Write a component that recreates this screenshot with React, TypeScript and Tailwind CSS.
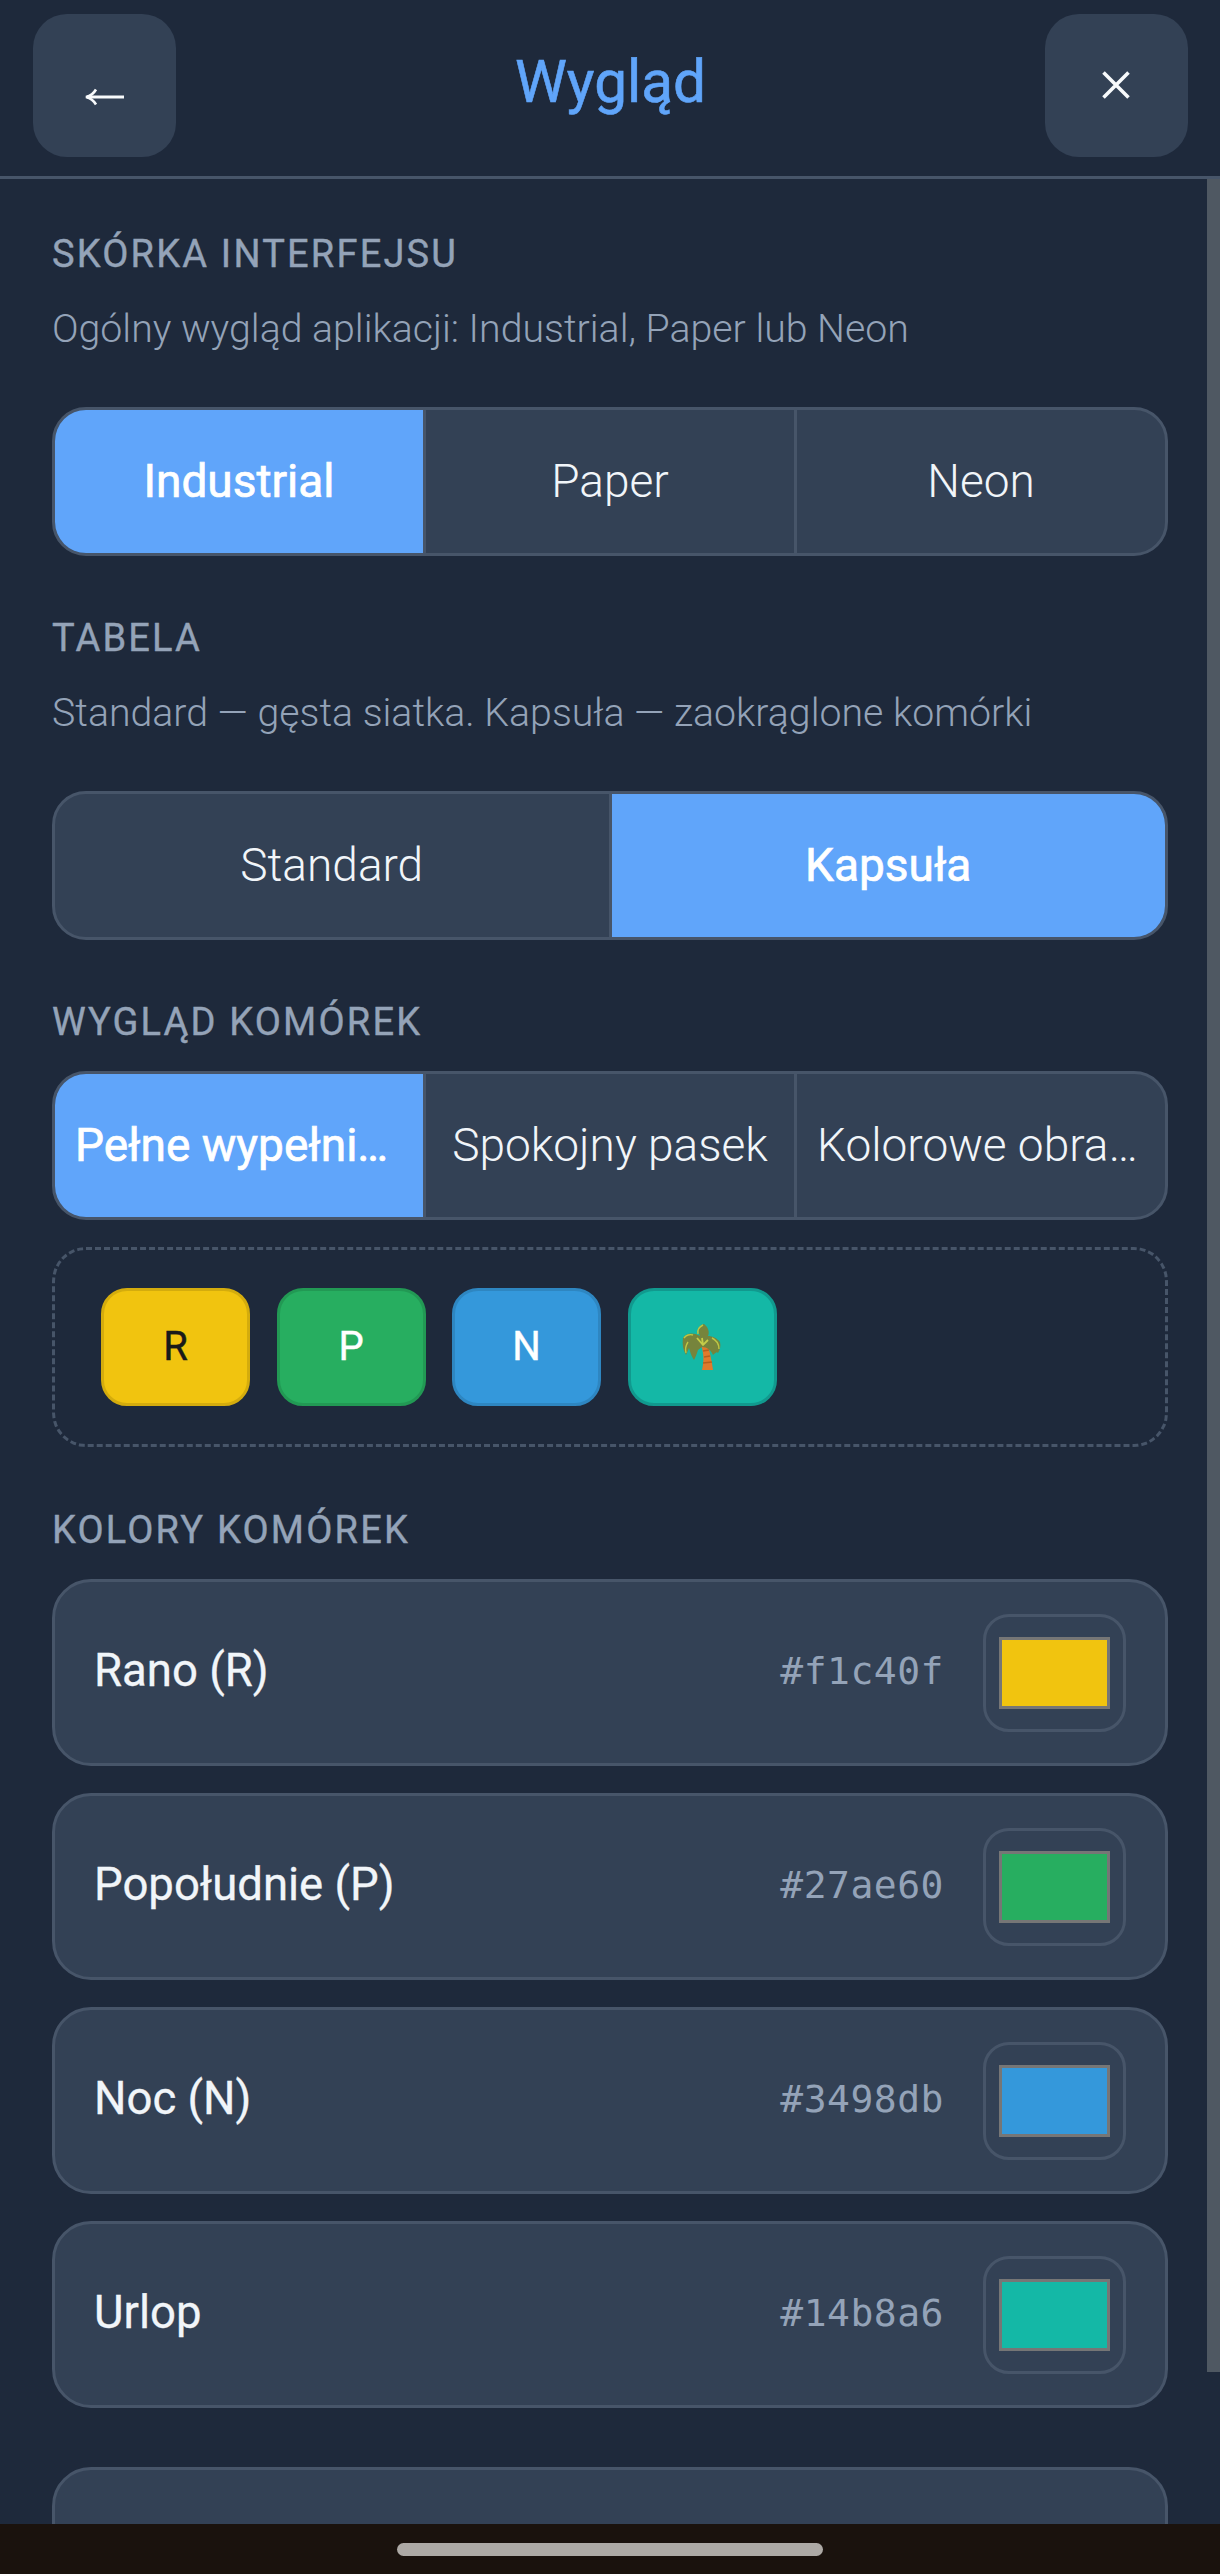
import React from "react";

const font = { fontFamily: "Roboto, 'Noto Sans', sans-serif" };

function Segmented({ items, active, className = "" }: { items: string[]; active: number; className?: string }) {
  return (
    <div className={`flex h-[149px] w-[1116px] overflow-hidden rounded-[34px] border-[3px] border-[#475569] bg-[#334155] ${className}`}>
      {items.map((t, i) => (
        <div
          key={t}
          className={`flex min-w-0 flex-1 items-center justify-center px-[20px] text-[46px] ${i < items.length - 1 ? "border-r-[3px] border-[#475569]" : ""} ${i === active ? "bg-[#60a5fa] font-normal text-white [-webkit-text-stroke:0.7px]" : "font-light text-[#f1f5f9]"}`}
        >
          <span className="truncate">{t}</span>
        </div>
      ))}
    </div>
  );
}

function Label({ children, className = "" }: { children: React.ReactNode; className?: string }) {
  return <div className={`h-[46px] text-[38px] leading-[46px] font-normal tracking-[2.2px] text-[#94a3b8] [-webkit-text-stroke:0.4px] ${className}`}>{children}</div>;
}

function Hint({ children }: { children: React.ReactNode }) {
  return <div className="mt-[29px] h-[46px] text-[39.25px] leading-[46px] font-light text-[#94a3b8]">{children}</div>;
}

function Chip({ bg, border, text, children }: { bg: string; border: string; text: string; children: React.ReactNode }) {
  return (
    <div className={`flex h-[118px] w-[149px] items-center justify-center rounded-[26px] border-[3px] text-[40px] font-normal [-webkit-text-stroke:0.4px] ${bg} ${border} ${text}`}>
      {children}
    </div>
  );
}

function ColorRow({ name, hex, bg }: { name: string; hex: string; bg: string }) {
  return (
    <div className="flex h-[187px] w-[1116px] items-center rounded-[39px] border-[3px] border-[#475569] bg-[#334155] pr-[39px] pl-[39px]">
      <div className="mb-[3px] flex-1 text-[45.5px] font-normal text-[#f1f5f9] [-webkit-text-stroke:0.3px]">{name}</div>
      <div className="mr-[39px] mb-[2px] text-[38px] tracking-[0.5px] text-[#94a3b8]" style={{ fontFamily: "'DejaVu Sans Mono', monospace" }}>{hex}</div>
      <div className="flex h-[118px] w-[143px] items-center justify-center rounded-[26px] border-[3px] border-[#475569]">
        <div className={`h-[72px] w-[111px] border-[3px] border-[#767676] ${bg}`} />
      </div>
    </div>
  );
}

function Palm() {
  return (
    <svg width="40" height="47" viewBox="0 0 40 47" fill="none">
      <path d="M19 21 L26 20 C28 30 30 38 31 46 L20 46 C22 38 22 29 19 21 Z" fill="#e07a2c" />
      <path d="M21 27l6-1M22 33l6-1M21 39l9-1" stroke="#b85f1e" strokeWidth="1.6" />
      <path d="M18 12 C11 8 4 9 1 14 C0 20 1 26 4 31 L7 24 C8 27 9 32 12 36 C14 32 15 29 16 26 L20 23 C25 23 29 26 31 31 C33 29 35 27 36 29 C38 26 39 22 38 18 C35 14 30 12 26 12 C28 8 26 3 22 0 C17 1 15 6 18 12 Z" fill="#76843c" />
      <path d="M2 14 C4 11 8 10 11 11 M4 29 C3 25 4 21 6 18 M16 10 C15 6 17 3 21 1 M37 25 C37 20 34 16 30 14" stroke="#bcc644" strokeWidth="1.4" />
      <path d="M15 14 L21 21 L26 16 M21 21 L20 14" stroke="#c4cc48" strokeWidth="1.8" />
    </svg>
  );
}

export default function App() {
  return (
    <div className="relative flex h-[2574px] w-[1220px] flex-col overflow-hidden bg-[#1e293b]" style={font}>
      <header className="flex h-[179px] shrink-0 items-start justify-between border-b-[3px] border-[#475569] pt-[14px] pr-[32px] pl-[33px]">
        <button className="flex h-[143px] w-[143px] items-center justify-center rounded-[34px] bg-[#334155] pt-[22px]">
          <svg width="42" height="18" viewBox="0 0 42 18" fill="none">
            <path d="M3 9H40" stroke="#f8fafc" strokeWidth="3.2" />
            <path d="M12 1.5C10 5 6 8 2 9c4 1 8 4 10 7.5" stroke="#f8fafc" strokeWidth="2.6" fill="none" />
          </svg>
        </button>
        <h1 className="mt-[34px] text-[58.5px] leading-[68px] font-normal text-[#60a5fa] [-webkit-text-stroke:0.6px]">Wygląd</h1>
        <button className="flex h-[143px] w-[143px] items-center justify-center rounded-[34px] bg-[#334155] pr-[1px] pb-[1px]">
          <svg width="28" height="28" viewBox="0 0 28 28" fill="none">
            <path d="M1.5 1.5L26.5 26.5M26.5 1.5L1.5 26.5" stroke="#f8fafc" strokeWidth="3.6" />
          </svg>
        </button>
      </header>

      <main className="min-h-0 flex-1 overflow-hidden px-[52px] pt-[52px]">
        <Label>SKÓRKA INTERFEJSU</Label>
        <Hint>Ogólny wygląd aplikacji: Industrial, Paper lub Neon</Hint>
        <Segmented className="mt-[55px]" items={["Industrial", "Paper", "Neon"]} active={0} />

        <Label className="mt-[59px]">TABELA</Label>
        <Hint>Standard — gęsta siatka. Kapsuła — zaokrąglone komórki</Hint>
        <Segmented className="mt-[55px]" items={["Standard", "Kapsuła"]} active={1} />

        <Label className="mt-[59px]">WYGLĄD KOMÓREK</Label>
        <Segmented className="mt-[26px]" items={["Pełne wypełnienie", "Spokojny pasek", "Kolorowe obramowanie"]} active={0} />

        <div className="mt-[27px] flex h-[200px] w-[1116px] items-center gap-[26.5px] rounded-[34px] border-[3px] border-dashed border-[#475569] pl-[46px]">
          <Chip bg="bg-[#f1c40f]" border="border-[#d4ac0d]" text="text-[#1a1a1a]">R</Chip>
          <Chip bg="bg-[#27ae60]" border="border-[#229954]" text="text-white">P</Chip>
          <Chip bg="bg-[#3498db]" border="border-[#2e86c1]" text="text-white">N</Chip>
          <Chip bg="bg-[#14b8a6]" border="border-[#11998e]" text="text-white"><Palm /></Chip>
        </div>

        <Label className="mt-[60px]">KOLORY KOMÓREK</Label>
        <div className="mt-[26px] flex flex-col gap-[27px]">
          <ColorRow name="Rano (R)" hex="#f1c40f" bg="bg-[#f1c40f]" />
          <ColorRow name="Popołudnie (P)" hex="#27ae60" bg="bg-[#27ae60]" />
          <ColorRow name="Noc (N)" hex="#3498db" bg="bg-[#3498db]" />
          <ColorRow name="Urlop" hex="#14b8a6" bg="bg-[#14b8a6]" />
        </div>
        <div className="mt-[59px] h-[187px] w-[1116px] rounded-[39px] border-[3px] border-[#475569] bg-[#334155]" />
      </main>

      <div className="absolute top-[179px] right-0 h-[2193px] w-[13px] bg-[#4f5862]" />

      <footer className="flex h-[50px] shrink-0 justify-center bg-[#1a120d] pt-[19px]">
        <div className="h-[13px] w-[426px] rounded-full bg-[#ada9a5]" />
      </footer>
    </div>
  );
}
